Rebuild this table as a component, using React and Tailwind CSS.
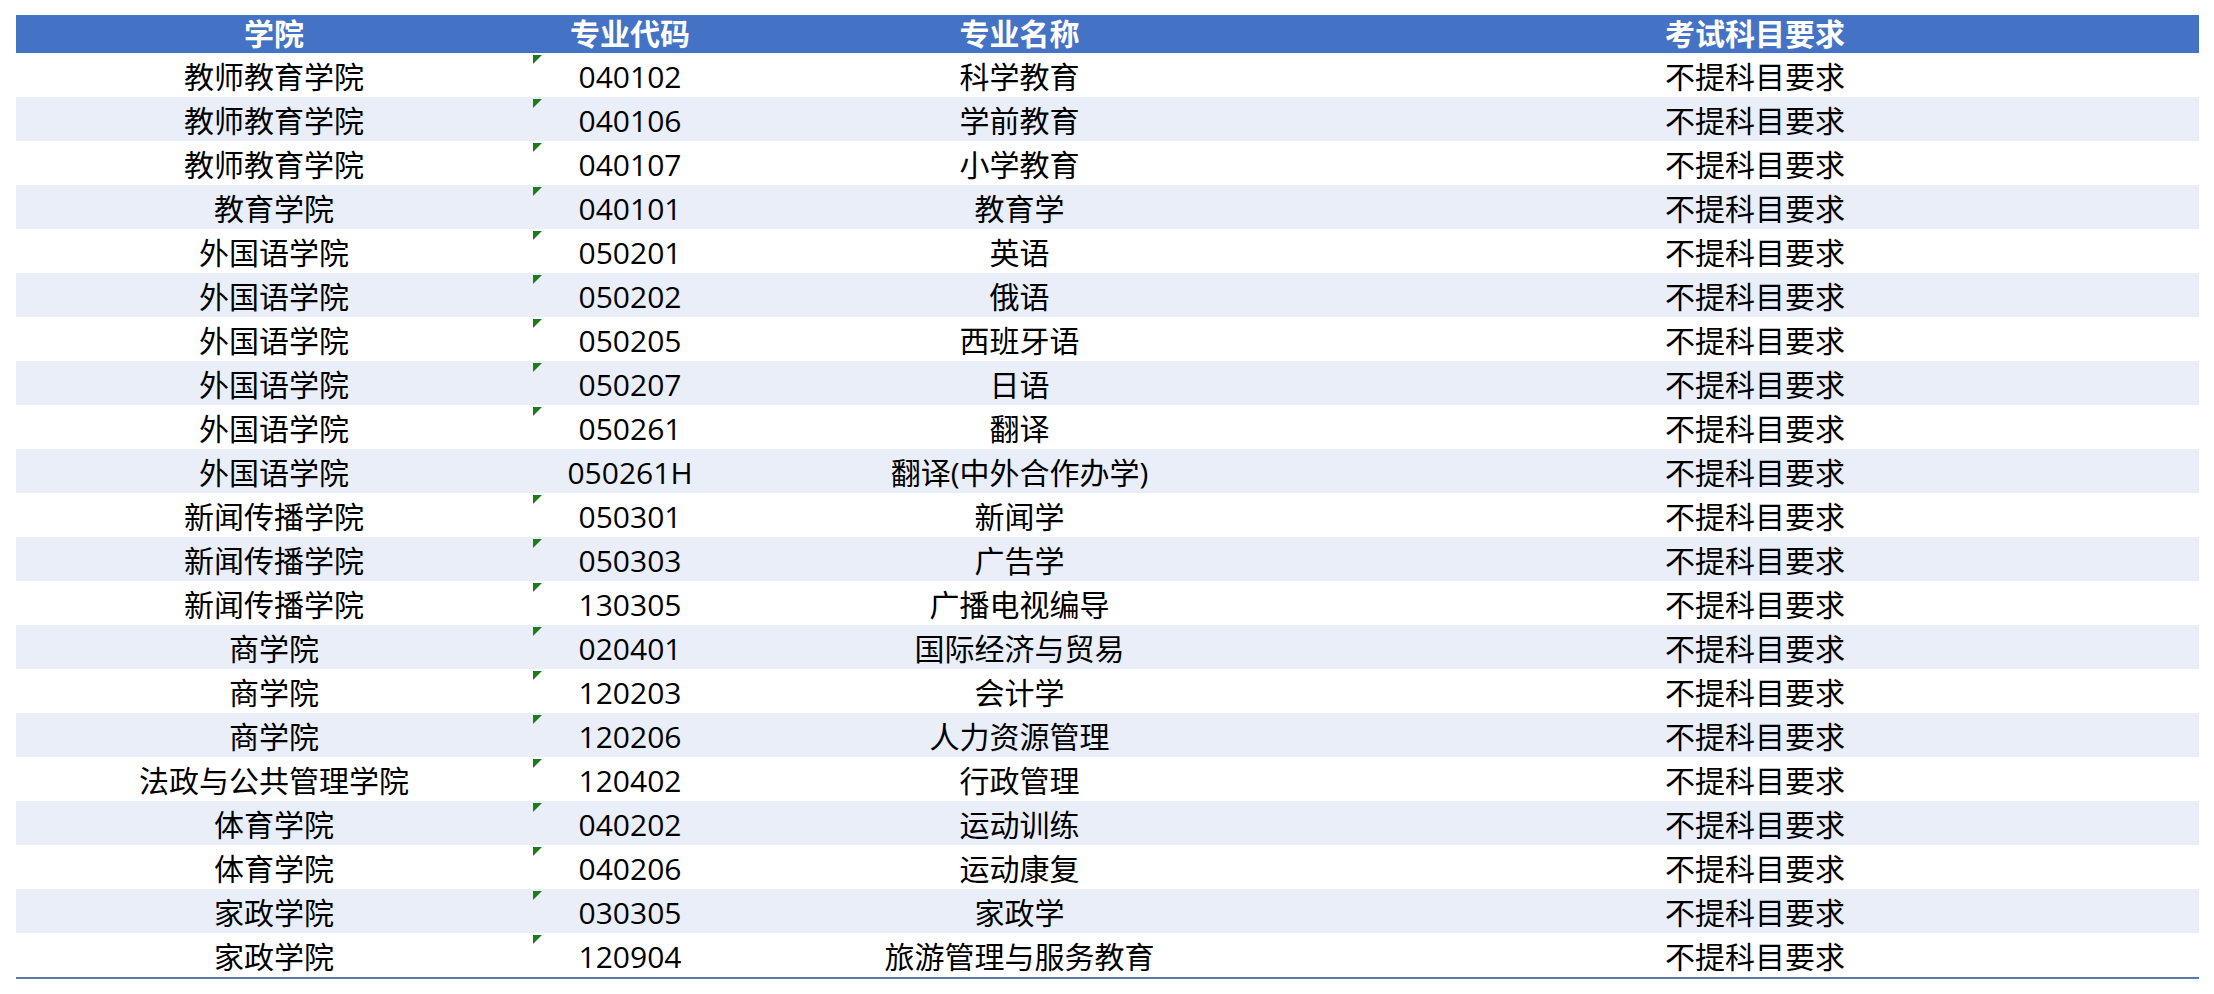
import React from "react";

const rows = [
  ["教师教育学院", "040102", "科学教育"],
  ["教师教育学院", "040106", "学前教育"],
  ["教师教育学院", "040107", "小学教育"],
  ["教育学院", "040101", "教育学"],
  ["外国语学院", "050201", "英语"],
  ["外国语学院", "050202", "俄语"],
  ["外国语学院", "050205", "西班牙语"],
  ["外国语学院", "050207", "日语"],
  ["外国语学院", "050261", "翻译"],
  ["外国语学院", "050261H", "翻译(中外合作办学)"],
  ["新闻传播学院", "050301", "新闻学"],
  ["新闻传播学院", "050303", "广告学"],
  ["新闻传播学院", "130305", "广播电视编导"],
  ["商学院", "020401", "国际经济与贸易"],
  ["商学院", "120203", "会计学"],
  ["商学院", "120206", "人力资源管理"],
  ["法政与公共管理学院", "120402", "行政管理"],
  ["体育学院", "040202", "运动训练"],
  ["体育学院", "040206", "运动康复"],
  ["家政学院", "030305", "家政学"],
  ["家政学院", "120904", "旅游管理与服务教育"],
];

const cols = "grid grid-cols-[516px_196px_583px_888px]";

const App = () => {
  return (
    <div
      className="w-[2214px] h-[994px] bg-white text-black text-[30px] leading-none overflow-hidden"
      style={{ fontFamily: '"Open Sans", "Noto Sans CJK SC", sans-serif' }}
    >
      <div className="ml-[16px] mt-[15px] w-[2183px] border-b-2 border-[#5b7aa8]">
        {/* header */}
        <div className={`${cols} h-[38px] bg-[#4472c4] text-white font-bold`}>
          <div className="flex items-center justify-center">学院</div>
          <div className="flex items-center justify-center">专业代码</div>
          <div className="flex items-center justify-center">专业名称</div>
          <div className="flex items-center justify-center">考试科目要求</div>
        </div>
        {rows.map((row, i) => (
          <div
            key={i}
            className={`${cols} h-[44px] ${i % 2 === 1 ? "bg-[#e9eef8]" : "bg-white"}`}
          >
            <div className="flex items-center justify-center pt-[3px]">{row[0]}</div>
            <div className="relative flex items-center justify-center pt-[3px]">
              {/^\d+$/.test(row[1]) && (
                <span className="absolute left-[1px] top-[2px] w-0 h-0 border-t-[9px] border-r-[9px] border-t-[#1e7b1e] border-r-transparent" />
              )}
              {row[1]}
            </div>
            <div className="flex items-center justify-center pt-[3px]">{row[2]}</div>
            <div className="flex items-center justify-center pt-[3px]">不提科目要求</div>
          </div>
        ))}
      </div>
    </div>
  );
};

export default App;
